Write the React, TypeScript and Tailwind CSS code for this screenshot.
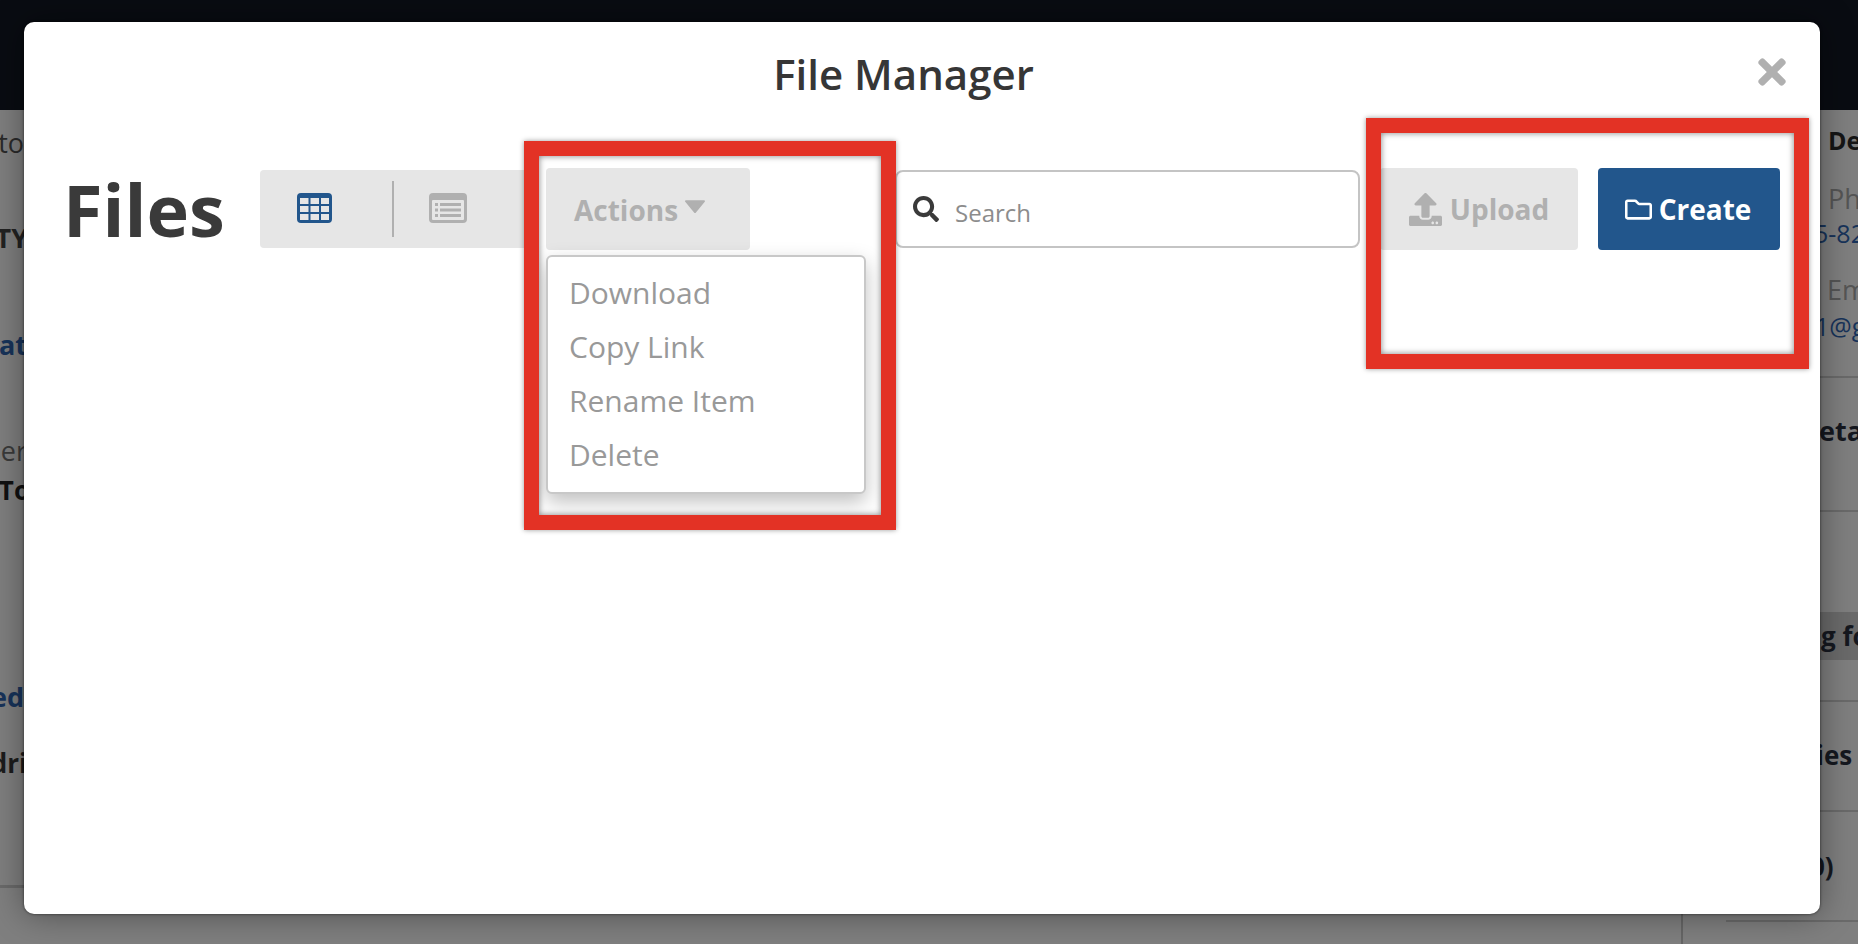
import React from "react";
import { FaUpload, FaRegFolder, FaSearch, FaTimes } from "react-icons/fa";

const font = { fontFamily: '"Open Sans", sans-serif' };

function GridIcon() {
  return (
    <svg width="35" height="30" viewBox="0 0 35 30">
      <rect x="0" y="0" width="35" height="30" rx="4" fill="#22568c" />
      <g fill="#e6e6e6">
        <rect x="3" y="5" width="8.5" height="6" /><rect x="13.5" y="5" width="8.5" height="6" /><rect x="24" y="5" width="8" height="6" />
        <rect x="3" y="13" width="8.5" height="6" /><rect x="13.5" y="13" width="8.5" height="6" /><rect x="24" y="13" width="8" height="6" />
        <rect x="3" y="21" width="8.5" height="6" /><rect x="13.5" y="21" width="8.5" height="6" /><rect x="24" y="21" width="8" height="6" />
      </g>
    </svg>
  );
}

function ListIcon() {
  return (
    <svg width="38" height="30" viewBox="0 0 38 30">
      <rect x="0" y="0" width="38" height="30" rx="4" fill="#b0b0b0" />
      <rect x="3" y="7" width="32" height="20" rx="1" fill="#e6e6e6" />
      <g fill="#b0b0b0">
        <rect x="6" y="10" width="3" height="3" /><rect x="11" y="10" width="21" height="3" />
        <rect x="6" y="15.5" width="3" height="3" /><rect x="11" y="15.5" width="21" height="3" />
        <rect x="6" y="21" width="3" height="3" /><rect x="11" y="21" width="21" height="3" />
      </g>
    </svg>
  );
}

function Caret() {
  return (
    <svg width="22" height="13" viewBox="0 0 22 13">
      <path d="M2 1.2h18L11 12z" fill="#b0b0b0" stroke="#b0b0b0" strokeWidth="2" strokeLinejoin="round" />
    </svg>
  );
}

function LeftText({ children, cls }: { children: React.ReactNode; cls: string }) {
  return <div className={`flex justify-end whitespace-nowrap h-[34px] leading-[34px] ${cls}`}>{children}</div>;
}

function RightText({ children, cls }: { children: React.ReactNode; cls: string }) {
  return <div className={`whitespace-nowrap h-[34px] leading-[34px] ${cls}`}>{children}</div>;
}

export default function App() {
  return (
    <div style={font} className="relative w-[1858px] h-[944px] overflow-hidden bg-[#7f7f7f]">
      <div className="h-[110px] bg-[#090c12]" />
      <div className="flex h-[834px]">
        <div className="w-[1683px] border-r-2 border-[#666666] overflow-hidden">
          <div className="w-[24px] h-[775px] overflow-hidden">
            <LeftText cls="mt-[16px] text-[27px] text-[#2a2a2a]">to</LeftText>
            <LeftText cls="mt-[61px] text-[27px] font-bold text-[#222] mr-[-4px]">TY</LeftText>
            <LeftText cls="mt-[73px] text-[27px] font-bold text-[#17335a] mr-[-3px]">at</LeftText>
            <LeftText cls="mt-[72px] text-[27px] text-[#3a3a3a] mr-[-3px]">ser</LeftText>
            <LeftText cls="mt-[5px] text-[26px] font-bold text-[#111] mr-[-6px]">To</LeftText>
            <LeftText cls="mt-[173px] text-[27px] font-bold text-[#17335a]">ed</LeftText>
            <LeftText cls="mt-[32px] text-[26px] font-bold text-[#1c1c1c] mr-[-3px]">dri</LeftText>
          </div>
          <div className="h-[3px] bg-[#6a6a6a]" />
        </div>
        <div className="flex-1 overflow-hidden">
          <RightText cls="mt-[13px] pl-[145px] text-[25px] font-bold text-[#151515]">Details</RightText>
          <RightText cls="mt-[25px] pl-[145px] text-[27px] text-[#555]">Phone</RightText>
          <RightText cls="mt-[0px] pl-[131px] text-[25px] text-[#17335a]">5-8211</RightText>
          <RightText cls="mt-[23px] pl-[144px] text-[27px] text-[#555]">Email</RightText>
          <RightText cls="mt-[2px] pl-[132px] text-[25px] text-[#17335a]">1@gmail</RightText>
          <div className="mt-[33px] h-[2px] bg-[#6a6a6a]" />
          <RightText cls="mt-[36px] pl-[136px] text-[27px] font-bold text-[#15181f]">etails</RightText>
          <div className="mt-[62px] h-[2px] bg-[#6a6a6a]" />
          <div className="mt-[100px] h-[48px] bg-[#6a6a6a]">
            <RightText cls="pt-[7px] pl-[138px] text-[26px] font-bold text-[#15181f]">g for</RightText>
          </div>
          <div className="mt-[40px] h-[2px] bg-[#6a6a6a]" />
          <RightText cls="mt-[36px] pl-[133px] text-[26px] font-bold text-[#15181f]">ies</RightText>
          <div className="mt-[38px] h-[2px] bg-[#6a6a6a]" />
          <RightText cls="mt-[37px] pl-[127px] text-[26px] font-bold text-[#15181f]">0)</RightText>
          <div className="mt-[37px] ml-[43px] h-[2px] bg-[#6a6a6a]" />
        </div>
      </div>

      <div className="absolute left-[24px] top-[22px] w-[1796px] h-[892px] rounded-[10px] bg-white shadow-[0_0_34px_rgba(0,0,0,0.4),0_0_3px_rgba(0,0,0,0.6)]">
        <div className="relative h-[146px]">
          <h1 className="pt-[23px] text-center text-[42px] leading-[58px] font-semibold text-[#363636] pr-[37px]">File Manager</h1>
          <button className="absolute left-[1728px] top-[30px] text-[#b0b0b0] text-[40px]"><FaTimes /></button>
        </div>
        <div className="flex items-start pl-[39px]">
          <div className="w-[197px] text-[72px] leading-[72px] font-bold text-[#3a3a3a] mt-[5px]">Files</div>
          <div className="mt-[2px] w-[270px] h-[78px] rounded-[4px] bg-[#e6e6e6] flex items-center">
            <div className="w-[132px] flex justify-start pl-[37px] mb-[2px]"><GridIcon /></div>
            <div className="w-[2px] h-[56px] bg-[#b0b0b0]" />
            <div className="w-[136px] flex justify-start pl-[35px] mb-[2px]"><ListIcon /></div>
          </div>
          <div className="relative ml-[16px] w-[204px] h-[82px] rounded-[4px] bg-[#e6e6e6] flex items-center pl-[28px] gap-[6px]">
            <span className="text-[28px] font-bold text-[#b0b0b0] leading-[40px] mt-[1px]">Actions</span>
            <span className="mb-[6px]"><Caret /></span>
            <div className="absolute left-0 top-[87px] w-[320px] h-[239px] rounded-[6px] border-2 border-[#c8c8c8] bg-white py-[9px] pl-[21px] shadow-[0_8px_20px_rgba(0,0,0,0.25)]">
              <div className="h-[54px] leading-[54px] text-[30px] text-[#999]">Download</div>
              <div className="h-[54px] leading-[54px] text-[30px] text-[#999]">Copy Link</div>
              <div className="h-[54px] leading-[54px] text-[30px] text-[#999]">Rename Item</div>
              <div className="h-[54px] leading-[54px] text-[30px] text-[#999]">Delete</div>
            </div>
          </div>
          <div className="ml-[145px] mt-[2px] w-[465px] h-[78px] rounded-[8px] border-2 border-[#c4c4c4] bg-white flex items-center pl-[16px] gap-[16px]">
            <FaSearch className="text-[#3a3a3a] text-[26px]" />
            <input placeholder="Search" className="flex-1 min-w-0 outline-none text-[24px] placeholder:text-[#8c8c8c] mt-[7px]" />
          </div>
          <div className="ml-[20px] w-[198px] h-[82px] rounded-[4px] bg-[#e6e6e6] flex items-center justify-center gap-[8px] text-[#b0b0b0]">
            <FaUpload className="text-[33px]" />
            <span className="text-[28px] font-bold">Upload</span>
          </div>
          <div className="ml-[20px] w-[182px] h-[82px] rounded-[4px] bg-[#22568c] flex items-center justify-center gap-[7px] pr-[2px] text-white">
            <FaRegFolder className="text-[27px]" />
            <span className="text-[28px] font-bold">Create</span>
          </div>
        </div>
      </div>

      <div className="absolute left-[524px] top-[141px] w-[372px] h-[389px] border-[15px] border-[#e33225] shadow-[0_0_5px_rgba(0,0,0,0.4),inset_0_0_6px_rgba(0,0,0,0.5)]" />
      <div className="absolute left-[1366px] top-[118px] w-[443px] h-[251px] border-[15px] border-[#e33225] shadow-[0_0_5px_rgba(0,0,0,0.4),inset_0_0_6px_rgba(0,0,0,0.5)]" />
    </div>
  );
}
